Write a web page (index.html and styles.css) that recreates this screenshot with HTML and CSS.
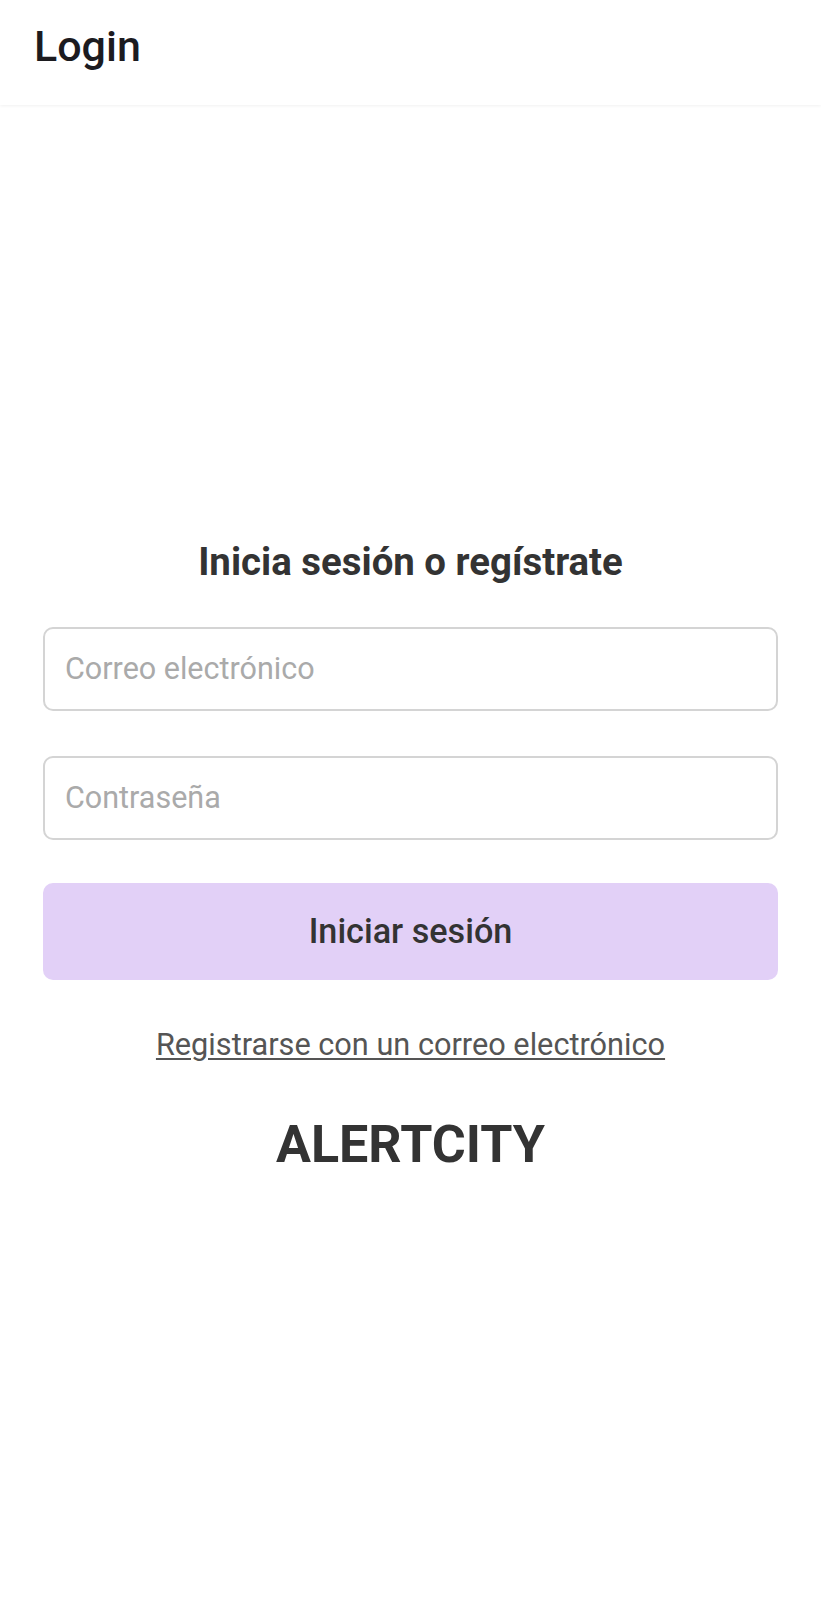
FILE: index.html
```html
<!DOCTYPE html>
<html lang="es">
<head>
<meta charset="utf-8">
<title>Login</title>
<link rel="stylesheet" href="styles.css">
</head>
<body>
<header class="topbar">
  <h1 class="topbar-title">Login</h1>
</header>
<main class="content">
  <div class="form">
    <h2 class="form-title">Inicia sesión o regístrate</h2>
    <div class="field"><span class="placeholder">Correo electrónico</span></div>
    <div class="field"><span class="placeholder">Contraseña</span></div>
    <button class="btn">Iniciar sesión</button>
    <a class="link" href="#">Registrarse con un correo electrónico</a>
    <div class="brand">ALERTCITY</div>
  </div>
</main>
</body>
</html>
```
FILE: styles.css
```css
* { box-sizing: border-box; }
html, body { margin: 0; padding: 0; background: #fff; }
body {
  font-family: Roboto, "Noto Sans", sans-serif;
  color: #333;
  width: 821px;
  height: 1600px;
  overflow: hidden;
}
.topbar {
  height: 105px;
  display: flex;
  align-items: center;
  padding-left: 34px;
  background: #fff;
  box-shadow: 0 1px 3px rgba(0,0,0,0.06);
  position: relative;
}
.topbar-title {
  margin: 0;
  font-size: 43px;
  font-weight: 500;
  color: #1c1b1f;
  line-height: 1;
  padding-bottom: 12px;
}
.content {
  height: 1495px;
  display: flex;
  flex-direction: column;
  justify-content: center;
  padding: 9px 43px 0;
}
.form {
  display: flex;
  flex-direction: column;
  align-items: stretch;
}
.form-title {
  margin: 0 0 43px;
  text-align: center;
  font-size: 38.4px;
  font-weight: 700;
  color: #333;
  line-height: 44px;
}
.field {
  height: 84px;
  border: 2px solid #d4d4d4;
  border-radius: 10px;
  display: flex;
  align-items: center;
  padding-left: 20px;
  margin-bottom: 45px;
}
.placeholder {
  font-size: 30.5px;
  color: #aaaaaa;
}
.field + .field { margin-bottom: 43px; }
.btn {
  height: 97px;
  border: none;
  border-radius: 10px;
  background: #e2d0f7;
  font-family: inherit;
  font-size: 34.2px;
  font-weight: 500;
  color: #333;
  margin-bottom: 47px;
}
.link {
  align-self: center;
  font-size: 30.7px;
  color: #555;
  text-decoration: underline;
  text-underline-offset: 3px;
  text-decoration-thickness: 2px;
  margin-bottom: 52px;
}
.brand {
  text-align: center;
  font-size: 52px;
  font-weight: 700;
  color: #333;
}
```
